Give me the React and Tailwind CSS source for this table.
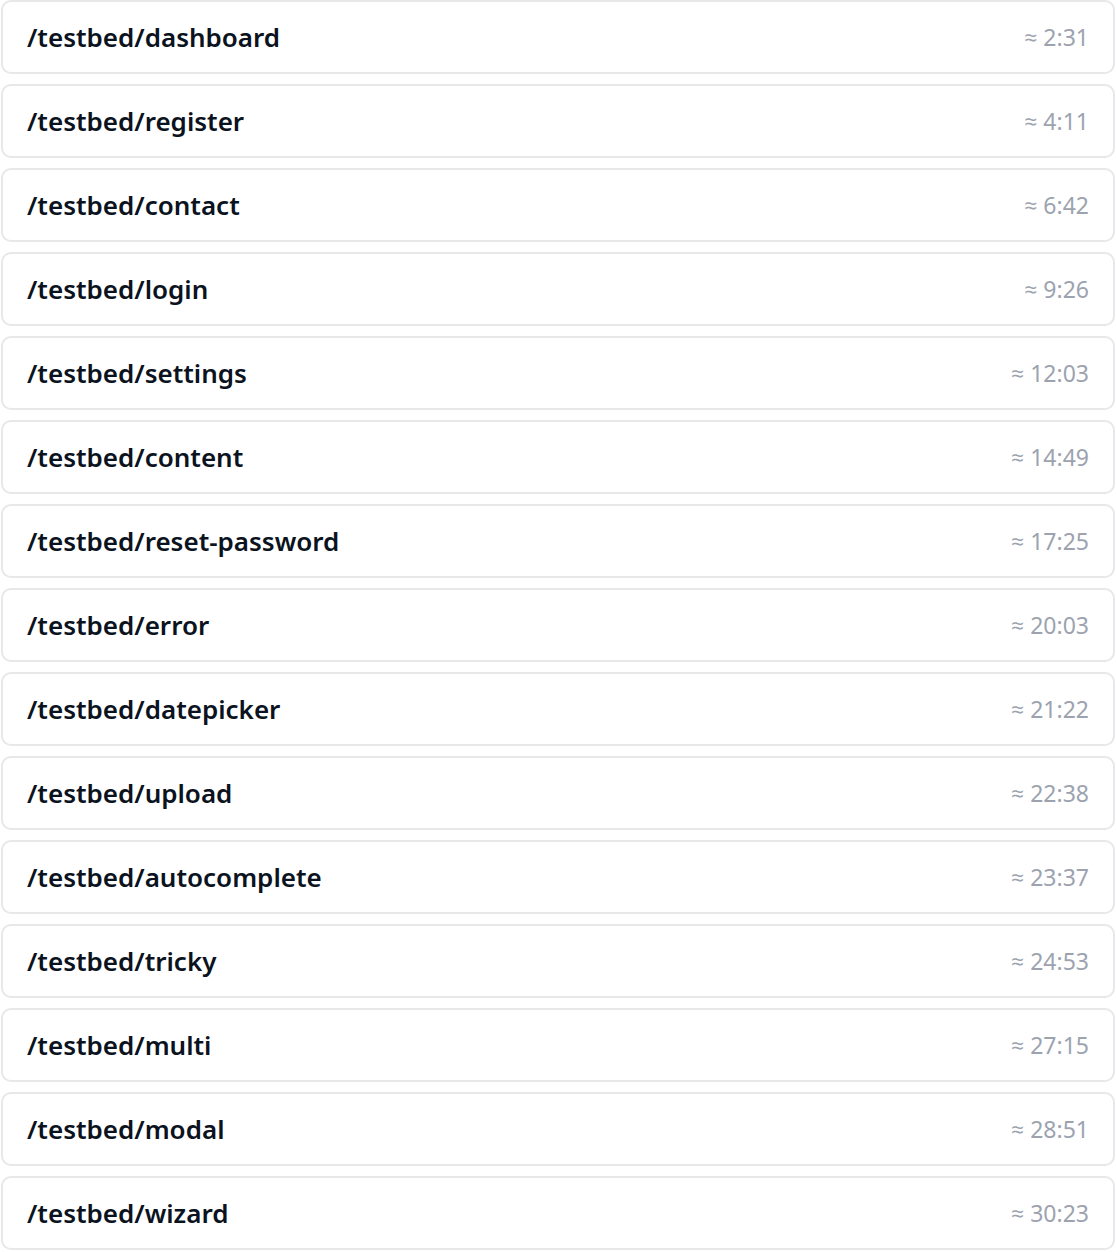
const routes = [
  ["/testbed/dashboard", "2:31"],
  ["/testbed/register", "4:11"],
  ["/testbed/contact", "6:42"],
  ["/testbed/login", "9:26"],
  ["/testbed/settings", "12:03"],
  ["/testbed/content", "14:49"],
  ["/testbed/reset-password", "17:25"],
  ["/testbed/error", "20:03"],
  ["/testbed/datepicker", "21:22"],
  ["/testbed/upload", "22:38"],
  ["/testbed/autocomplete", "23:37"],
  ["/testbed/tricky", "24:53"],
  ["/testbed/multi", "27:15"],
  ["/testbed/modal", "28:51"],
  ["/testbed/wizard", "30:23"],
];

export default function App() {
  return (
    <div
      className="bg-white min-h-screen px-px flex flex-col gap-[10px]"
      style={{ fontFamily: '"Noto Sans", "Open Sans", sans-serif' }}
    >
      {routes.map(([path, time]) => (
        <div
          key={path}
          className="h-[74px] border-2 border-[#e8e8ea] rounded-[10px] pl-6 pr-6 flex items-center justify-between"
        >
          <span className="text-[26px] font-semibold text-[#0b1220]">{path}</span>
          <span className="text-[23px] text-[#9ca3af]">≈ {time}</span>
        </div>
      ))}
    </div>
  );
}
